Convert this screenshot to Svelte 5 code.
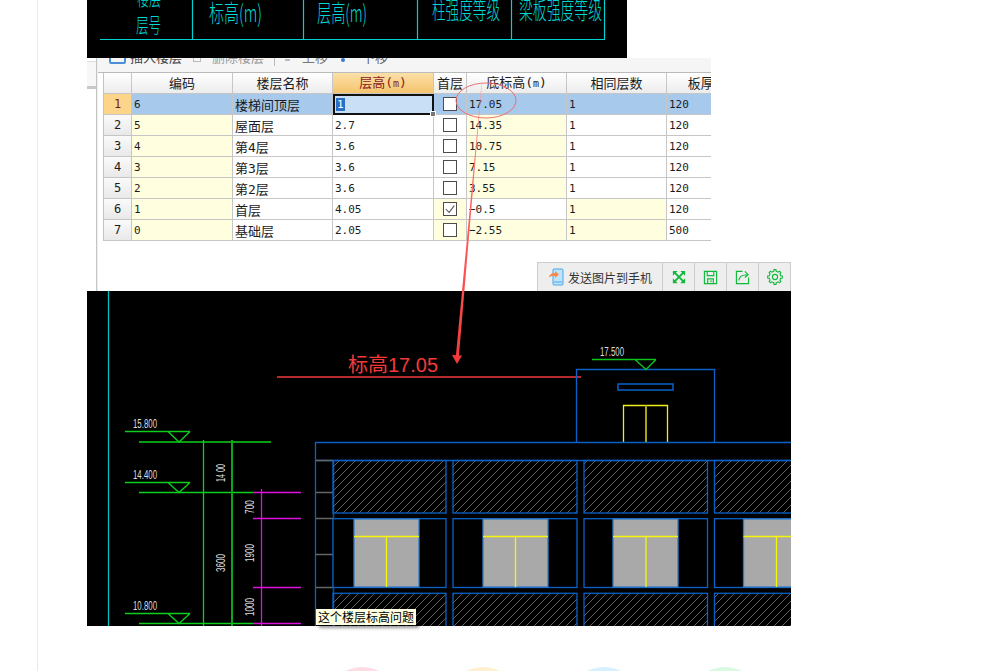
<script>
  const rows = [
    { no: 1, code: "6", name: "楼梯间顶层", h: "1", first: false, base: "17.05", same: "1", slab: "120" },
    { no: 2, code: "5", name: "屋面层", h: "2.7", first: false, base: "14.35", same: "1", slab: "120" },
    { no: 3, code: "4", name: "第4层", h: "3.6", first: false, base: "10.75", same: "1", slab: "120" },
    { no: 4, code: "3", name: "第3层", h: "3.6", first: false, base: "7.15", same: "1", slab: "120" },
    { no: 5, code: "2", name: "第2层", h: "3.6", first: false, base: "3.55", same: "1", slab: "120" },
    { no: 6, code: "1", name: "首层", h: "4.05", first: true, base: "−0.5", same: "1", slab: "120", low: true },
    { no: 7, code: "0", name: "基础层", h: "2.05", first: false, base: "−2.55", same: "1", slab: "500", low: true, baseYellow: true }
  ];

  // cad drawing, all in page coordinates through the viewBox
  const bays = [
    { x: 333, w: 113, win: 354, mid: 386.5 },
    { x: 453, w: 124, win: 483, mid: 515.5 },
    { x: 584, w: 123.5, win: 613, mid: 646 },
    { x: 714.5, w: 90, win: 743.5, mid: 776.5 }
  ];
  const levels = [
    { label: "15.800", top: 431, line: 442, end: 271 },
    { label: "14.400", top: 482, line: 492.5, end: 253 },
    { label: "10.800", top: 613, line: 623.5, end: 253 }
  ];
  const magenta = [492.5, 518.5, 587.5, 623.5];
  const dims = [
    { t: "14 00", x: 225, y: 473, len: 18 },
    { t: "3600", x: 225, y: 563, len: 18 },
    { t: "700", x: 254, y: 507, len: 14 },
    { t: "1900", x: 254, y: 553, len: 18 },
    { t: "1000", x: 254, y: 607, len: 18 }
  ];
  const circles = ["#ffdbe3", "#fff0cf", "#d6f0ff", "#d9f9e0"];

  function gearPath(cx, cy, r1, r2, teeth) {
    let d = "";
    const step = (Math.PI * 2) / teeth;
    for (let i = 0; i < teeth; i++) {
      const a = i * step;
      const pts = [
        [r1, a - step * 0.5],
        [r1, a - step * 0.27],
        [r2, a - step * 0.17],
        [r2, a + step * 0.17],
        [r1, a + step * 0.27]
      ];
      pts.forEach(([r, t], j) => {
        const px = (cx + r * Math.cos(t)).toFixed(2);
        const py = (cy + r * Math.sin(t)).toFixed(2);
        d += `${i === 0 && j === 0 ? "M" : "L"}${px} ${py}`;
      });
    }
    return d + "Z";
  }
</script>

<main class="page">
  <div class="stack">
    <svg class="shot-top" viewBox="87 0 540 58" width="540" height="58">
      <rect x="87" y="0" width="540" height="58" fill="#000" />
      <g class="cyan-text">
        <text class="small" x="137" y="6" textLength="24" lengthAdjust="spacingAndGlyphs">楼层</text>
        <text class="small" x="136" y="33" textLength="25" lengthAdjust="spacingAndGlyphs">层号</text>
        <text x="209" y="22" textLength="53" lengthAdjust="spacingAndGlyphs">标高(m)</text>
        <text x="317" y="22" textLength="50" lengthAdjust="spacingAndGlyphs">层高(m)</text>
        <text x="432" y="19" textLength="68" lengthAdjust="spacingAndGlyphs">柱强度等级</text>
        <text x="519" y="19" textLength="83" lengthAdjust="spacingAndGlyphs">梁板强度等级</text>
      </g>
      <g stroke="#00d0d0" stroke-width="1.200" fill="none">
        <path d="M100 39.500H605" />
        <path d="M192.500 0V39M303.500 0V39M417.500 0V39M511.500 0V39M604.500 0V39" />
      </g>
    </svg>

    <section class="shot-mid">
      <div class="shot-table">
        <div class="side">
          <div class="side-box"></div>
        </div>
        <div class="main">
          <div class="tools">
            <span class="tool-icon blue"></span>
            <span class="tool-label first">插入楼层</span>
            <span class="tool-icon grey"></span>
            <span class="tool-label muted">删除楼层</span>
            <span class="tool-sep"></span>
            <span class="tool-icon dash"></span>
            <span class="tool-label up">上移</span>
            <span class="tool-icon dot-blue"></span>
            <span class="tool-label down">下移</span>
          </div>
          <table class="floors">
            <colgroup>
              <col style="width:28px" /><col style="width:101px" /><col style="width:100px" /><col style="width:101px" />
              <col style="width:33px" /><col style="width:100px" /><col style="width:100px" /><col style="width:100px" />
            </colgroup>
            <thead>
              <tr>
                <th></th>
                <th>编码</th>
                <th>楼层名称</th>
                <th class="hot">层高(<small>m</small>)</th>
                <th>首层</th>
                <th>底标高(<small>m</small>)</th>
                <th>相同层数</th>
                <th>板厚(mm)</th>
              </tr>
            </thead>
            <tbody>
              {#each rows as r, i}
                <tr class:selected={i === 0}>
                  <td class="no">{r.no}</td>
                  <td class="yellow">{r.code}</td>
                  <td class="name">{r.name}</td>
                  <td class:cur={i === 0}>
                    {#if i === 0}
                      <span class="sel-text">{r.h}</span><span class="handle"></span>
                    {:else}
                      {r.h}
                    {/if}
                  </td>
                  <td class="chk" class:yellow={r.low}>
                    <span class="box">
                      {#if r.first}
                        <svg viewBox="0 0 14 14" width="12" height="12"><path d="M2 7l4 4 6-8" fill="none" stroke="#555" stroke-width="1.2" /></svg>
                      {/if}
                    </span>
                  </td>
                  <td class:yellow={!r.low || r.baseYellow}>{r.base}</td>
                  <td class:yellow={r.low}>{r.same}</td>
                  <td>{r.slab}</td>
                </tr>
              {/each}
            </tbody>
          </table>
        </div>
      </div>

      <div class="share">
        <button class="send">
          <svg viewBox="0 0 16 18" width="16" height="18">
            <rect x="5" y="1" width="10" height="16" rx="1" fill="#bfe3fb" stroke="#4aa6ea" />
            <path d="M6 14h8" stroke="#4aa6ea" />
            <path d="M1 10c0-3 2-5 6-5V3l4 3.500-4 3.500V8c-3 0-5 0-6 2z" fill="#f58a4b" />
          </svg>
          发送图片到手机
        </button>
        <button>
          <svg viewBox="0 0 16 16" width="14" height="14" fill="#10b93a">
            <path d="M1 1h5.500L1 6.500zM15 1v5.500L9.500 1zM1 15v-5.500L6.500 15zM15 15H9.500L15 9.500z" />
            <path d="M3 3l10 10M13 3L3 13" stroke="#10b93a" stroke-width="2.200" fill="none" />
          </svg>
        </button>
        <button>
          <svg viewBox="0 0 16 16" width="15" height="15" fill="none" stroke="#10b93a" stroke-width="1.200">
            <path d="M1.500 1.500h13v13h-13z" />
            <path d="M4.500 1.500v4.500h7V1.500M5 14.500v-5h6v5M8.500 11v2" />
          </svg>
        </button>
        <button>
          <svg viewBox="0 0 16 16" width="15" height="15" fill="none" stroke="#10b93a" stroke-width="1.200">
            <path d="M8 1.500H1.500v13h13V8" />
            <path d="M4 11c.5-4 3-6 9-6M10.500 1.500L14 5l-3.500 3" />
          </svg>
        </button>
        <button>
          <svg viewBox="0 0 16 16" width="16" height="16" fill="none" stroke="#10b93a" stroke-width="1.100">
            <path d={gearPath(8, 8, 5.8, 7.4, 8)} />
            <circle cx="8" cy="8" r="2.600" />
          </svg>
        </button>
      </div>
    </section>

    <section class="shot-cad">
      <svg viewBox="87 291 704 335" width="704" height="335">
        <defs>
          <pattern id="hatch" width="8" height="8" patternUnits="userSpaceOnUse">
            <path d="M0 8L8 0M-1 1L1 -1M7 9L9 7" stroke="#626262" stroke-width="1" />
          </pattern>
        </defs>
        <rect x="87" y="291" width="704" height="335" fill="#000" />
        <path d="M108.500 291V626" stroke="#00c0c0" stroke-width="1.300" />

        <path d="M277 377H581" stroke="#f23a3a" stroke-width="1.600" />
        <text class="red-label" x="348" y="372">标高17.05</text>

        <!-- penthouse -->
        <g fill="none" stroke="#0a62c8" stroke-width="1.300">
          <path d="M576.500 442V369.500H714.500V442" />
          <rect x="618" y="384" width="55" height="6" stroke-width="1.500" />
        </g>
        <g fill="none" stroke="#f0f018" stroke-width="1.300">
          <path d="M623.500 442V405.500H667.500V442" />
          <path d="M646 405.500V442" stroke="#aaa215" stroke-width="2" />
        </g>
        <text class="dim" x="600" y="356" textLength="24" lengthAdjust="spacingAndGlyphs">17.500</text>
        <path d="M592 359.500H656M635 359.500L646 369.500L656 359.500" fill="none" stroke="#0cc41c" stroke-width="1.300" />

        <!-- levels and dims -->
        {#each levels as l}
          <text class="dim" x="133" y={l.top - 3} textLength="24" lengthAdjust="spacingAndGlyphs">{l.label}</text>
          <path d="M125 {l.top + 0.5}H190M168 {l.top + 0.5}L179 {l.line}L190 {l.top + 0.5}" fill="none" stroke="#0cd01c" stroke-width="1.300" />
          <path d="M139 {l.line}H{l.end}" stroke="#0cd01c" stroke-width="1.300" />
        {/each}
        <path d="M203.500 440V626" stroke="#0cd01c" stroke-width="1.300" />
        <path d="M232 440V626" stroke="#0aa818" stroke-width="2" />
        <path d="M261.500 489V626" stroke="#e010e0" stroke-width="1.300" />
        {#each magenta as y}
          <path d="M253 {y}H301" stroke="#e010e0" stroke-width="1.300" />
        {/each}
        {#each dims as d}
          <text class="dim" transform="rotate(-90 {d.x} {d.y})" x={d.x - d.len / 2} y={d.y} textLength={d.len} lengthAdjust="spacingAndGlyphs">{d.t}</text>
        {/each}

        <!-- building frame -->
        <path d="M791 442.500H315.500V626" fill="none" stroke="#0a62c8" stroke-width="1.300" />
        <path d="M315.500 460.500H791" stroke="#0a62c8" stroke-width="1.300" />
        <path d="M333.500 460V626" stroke="#0a4f9c" stroke-width="1.600" />
        <path d="M316 460.500H333M316 492.500H333M316 518.500H333M316 554.500H333M316 587.500H333" stroke="#666" stroke-width="1.300" />

        {#each bays as b}
          <rect x={b.x} y="460.500" width={b.w} height="52.500" fill="url(#hatch)" stroke="#0a62c8" stroke-width="1.300" />
          <rect x={b.x} y="518.700" width={b.w} height="68.800" fill="#000" stroke="#0a62c8" stroke-width="1.300" />
          <rect x={b.x} y="593.300" width={b.w} height="40" fill="url(#hatch)" stroke="#0a62c8" stroke-width="1.300" />
          <rect x={b.win} y="519" width="65" height="68" fill="#a9a9a9" stroke="#2f78c8" stroke-width="1.300" />
          <path d="M{b.win} 536.500H{b.win + 65}M{b.mid} 536.500V587" stroke="#f6f60c" stroke-width="1.300" fill="none" />
        {/each}
      </svg>
      <div class="tip">这个楼层标高问题</div>
    </section>

    <!-- hand drawn markup on top of the screenshots -->
    <svg class="markup" viewBox="87 0 704 626" width="704" height="626">
      <defs>
        <linearGradient id="fade" x1="0" y1="0" x2="0" y2="1">
          <stop offset="0" stop-color="#ff9a9a" />
          <stop offset="0.35" stop-color="#ff6a6a" />
          <stop offset="1" stop-color="#f63c3c" />
        </linearGradient>
      </defs>
      <ellipse cx="486" cy="100.500" rx="30" ry="17.500" fill="none" stroke="#ee7070" stroke-width="1" />
      <path d="M481.500 84L481.900 84L458.800 357L455.800 357z" fill="url(#fade)" />
      <path d="M452 355L462 355.500L457 364z" fill="#f23a3a" />
    </svg>
  </div>

  <div class="dots">
    {#each circles as c}
      <span class="dot" style="background:{c}"></span>
    {/each}
  </div>
</main>

<style>
  :global(body) {
    margin: 0;
    background: #fff;
    overflow: hidden;
  }

  .page {
    margin-left: 37px;
    padding-left: 49px;
    height: 671px;
    box-sizing: border-box;
    border-left: 1px solid #e9e9e9;
    overflow: hidden;
    font-family: "DejaVu Sans Mono", "Noto Sans CJK SC", monospace;
    color: #222;
  }

  .stack {
    position: relative;
    width: 704px;
  }

  svg {
    display: block;
  }

  .cyan-text text {
    fill: #00d8d8;
    font-family: "Noto Sans CJK SC", sans-serif;
    font-size: 24px;
    font-weight: 300;
  }

  .cyan-text text.small {
    font-size: 20px;
  }

  .shot-mid {
    position: relative;
    height: 233px;
  }

  .shot-table {
    display: flex;
    width: 624px;
    height: 233px;
    overflow: hidden;
    background: #fff;
  }

  .side {
    flex: 0 0 9px;
    border-right: 1px solid #c4c4c4;
    background: #fff;
  }

  .side-box {
    height: 24px;
    margin-top: 3px;
    background: #f7f7f7;
    border-top: 1px solid #ddd;
    border-bottom: 3px solid #c8c8c8;
  }

  .main {
    flex: 1;
    min-width: 0;
    padding-left: 5px;
    background: linear-gradient(#f5f5f5 0, #f5f5f5 15px, #fff 15px);
    border-left: 1px solid #eee;
  }

  .tools {
    position: relative;
    height: 14px;
    overflow: hidden;
    border-bottom: 1px solid #bbb;
    margin-left: -5px;
  }

  .tool-label {
    position: absolute;
    top: -9px;
    font-family: "Noto Sans CJK SC", sans-serif;
    font-size: 13px;
    color: #444;
    line-height: 16px;
  }

  .tool-label.first { left: 32px; }
  .tool-label.muted { left: 114px; color: #999; }
  .tool-label.up { left: 204px; color: #777; }
  .tool-label.down { left: 264px; color: #666; }

  .tool-icon {
    position: absolute;
  }

  .tool-icon.blue {
    left: 11px;
    top: -4px;
    width: 13px;
    height: 6px;
    border: 2px solid #4a90d9;
    border-radius: 2px;
  }

  .tool-icon.grey {
    left: 95px;
    top: -4px;
    width: 6px;
    height: 6px;
    border: 1px solid #bbb;
  }

  .tool-icon.dash {
    left: 187px;
    top: 1px;
    width: 5px;
    height: 2px;
    background: #bbb;
  }

  .tool-icon.dot-blue {
    left: 243px;
    top: 0;
    width: 4px;
    height: 4px;
    border-radius: 50%;
    background: #3a78c8;
  }

  .tool-sep {
    position: absolute;
    left: 176px;
    top: 0;
    height: 8px;
    border-left: 1px solid #bbb;
  }

  .floors {
    table-layout: fixed;
    width: 663px;
    border-collapse: separate;
    border-spacing: 0;
    border-left: 1px solid #c4c4c4;
    font-size: 11px;
  }

  th,
  td {
    height: 21px;
    box-sizing: border-box;
    padding: 0 0 0 2px;
    border-right: 1px solid #c6c6c6;
    border-bottom: 1px solid #c6c6c6;
    font-weight: 400;
    white-space: nowrap;
    overflow: hidden;
    background: #fff;
    color: #1c1c1c;
  }

  th {
    padding: 0;
    font-size: 13px;
    text-align: center;
    background: linear-gradient(#fff, #ececec);
    line-height: 19px;
  }

  th small {
    font-size: 10px;
  }

  th.hot {
    background: linear-gradient(#fbe0a8, #f5c46e);
    color: #8a1c1c;
  }

  td.no {
    padding: 0;
    text-align: center;
    background: linear-gradient(#fafafa, #e9e9e9);
    font-size: 12px;
  }

  td.name {
    font-size: 13px;
  }

  td.yellow {
    background: #ffffe0;
  }

  .selected td {
    background: #a6c9ec;
  }

  .selected td.no {
    background: #fdd58a;
    color: #7a1a1a;
  }

  .selected td.cur {
    position: relative;
    overflow: visible;
    background: #c9dff6;
    border: 2px solid #111;
    padding-left: 1px;
  }

  .sel-text {
    background: #2a6fc4;
    color: #fff;
    padding: 0 1px;
  }

  .handle {
    position: absolute;
    right: -4px;
    bottom: -4px;
    width: 4px;
    height: 4px;
    background: #777;
    border: 1px solid #fff;
  }

  td.chk {
    padding: 0;
    text-align: center;
  }

  .box {
    display: inline-flex;
    align-items: center;
    justify-content: center;
    width: 14px;
    height: 14px;
    box-sizing: border-box;
    vertical-align: middle;
    background: #fff;
    border: 1px solid #4c4c4c;
  }

  .share {
    position: absolute;
    right: 0;
    bottom: 0;
    display: flex;
    height: 29px;
    box-sizing: border-box;
    background: #eee;
    border: 1px solid #ccc;
    border-bottom: 0;
  }

  .share button {
    display: flex;
    align-items: center;
    justify-content: center;
    width: 32px;
    padding: 0;
    background: none;
    border: 0;
    border-left: 1px solid #ccc;
    font-family: "Noto Sans CJK SC", sans-serif;
    font-size: 12px;
    color: #333;
  }

  .share button.send {
    width: 124px;
    gap: 4px;
    padding-left: 10px;
    justify-content: flex-start;
    border-left: 0;
  }

  .shot-cad {
    position: relative;
    height: 335px;
  }

  .red-label {
    fill: #f23a3a;
    font-family: "Liberation Sans", "Noto Sans CJK SC", sans-serif;
    font-size: 20px;
  }

  .dim {
    fill: #ddd;
    font-family: "Liberation Sans", sans-serif;
    font-size: 12px;
  }

  .tip {
    position: absolute;
    left: 229px;
    bottom: 1px;
    width: 100px;
    height: 16px;
    box-sizing: border-box;
    background: #ffffe1;
    box-shadow: 3px 3px 3px rgba(0, 0, 0, 0.4);
    font-family: "Noto Sans CJK SC", sans-serif;
    font-size: 12px;
    line-height: 15px;
    text-align: center;
    color: #000;
  }

  .markup {
    position: absolute;
    left: 0;
    top: 0;
    pointer-events: none;
  }

  .dots {
    display: flex;
    gap: 45px;
    margin: 41px 0 0 237px;
  }

  .dot {
    flex: none;
    width: 76px;
    height: 76px;
    border-radius: 50%;
  }
</style>
